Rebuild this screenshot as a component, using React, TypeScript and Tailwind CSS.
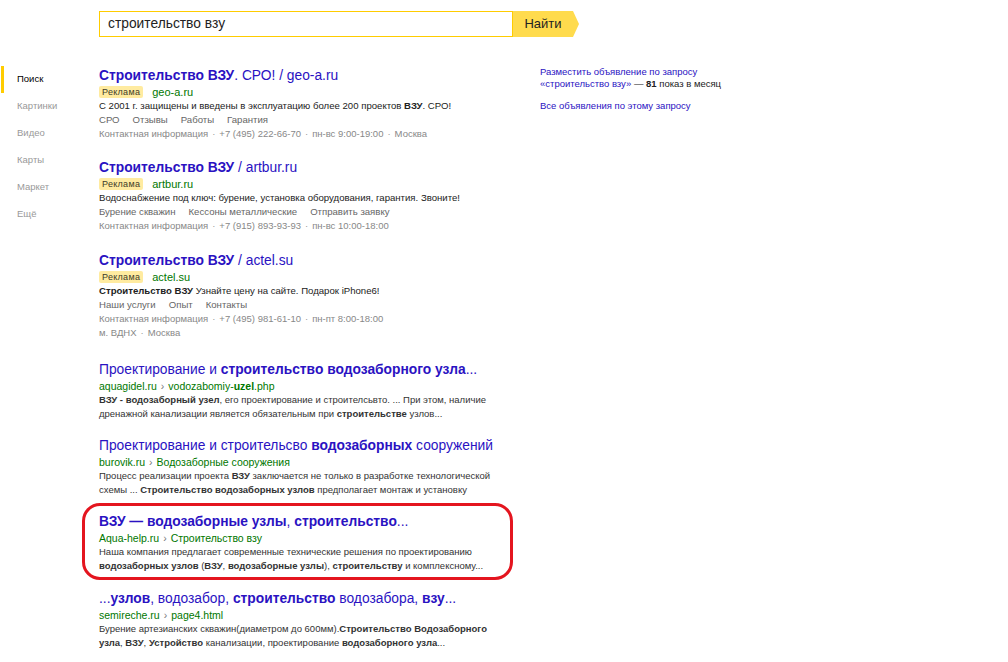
import React from "react";

const TITLE = "text-[#2a12c2]";

function Sep() {
  return <span className="mx-[4px] text-[#999]">·</span>;
}

function Ad({
  title,
  domain,
  snippet,
  links,
  contacts,
  extra,
}: {
  title: React.ReactNode;
  domain: string;
  snippet: React.ReactNode;
  links: string[];
  contacts: string[];
  extra?: string[];
}) {
  return (
    <div>
      <div className={`h-[18px] leading-[18px] text-[13.8px] ${TITLE} whitespace-nowrap`}>{title}</div>
      <div className="h-[14px] flex items-center">
        <span className="h-[12px] leading-[12px] px-[3px] rounded-[2px] bg-[#ffeba0] text-[9px] text-[#3d3b28] tracking-[0.3px]">
          Реклама
        </span>
        <span className="ml-[9px] text-[11px] text-[#070] leading-[14px]">{domain}</span>
      </div>
      <div className="h-[14px] leading-[14px] text-[9.6px] text-[#222] whitespace-nowrap">{snippet}</div>
      <div className="h-[14px] leading-[14px] text-[9.6px] text-[#666] flex gap-[13px] whitespace-nowrap">
        {links.map((l) => (
          <span key={l}>{l}</span>
        ))}
      </div>
      <div className="h-[14px] leading-[14px] text-[9.5px] text-[#888] whitespace-nowrap">
        {contacts.map((c, i) => (
          <React.Fragment key={c}>
            {i > 0 && <Sep />}
            <span>{c}</span>
          </React.Fragment>
        ))}
      </div>
      {extra && (
        <div className="h-[14px] leading-[14px] text-[9.5px] text-[#888] whitespace-nowrap">
          {extra.map((c, i) => (
            <React.Fragment key={c}>
              {i > 0 && <Sep />}
              <span>{c}</span>
            </React.Fragment>
          ))}
        </div>
      )}
    </div>
  );
}

function Organic({
  title,
  url,
  lines,
}: {
  title: React.ReactNode;
  url: React.ReactNode;
  lines: React.ReactNode[];
}) {
  return (
    <div>
      <div className={`h-[18px] leading-[18px] text-[13.8px] ${TITLE} whitespace-nowrap`}>{title}</div>
      <div className="h-[14px] leading-[14px] text-[10.5px] text-[#070] whitespace-nowrap">{url}</div>
      {lines.map((l, i) => (
        <div key={i} className="h-[14px] leading-[14px] text-[9.5px] text-[#333] whitespace-nowrap">
          {l}
        </div>
      ))}
    </div>
  );
}

const Arrow = () => <span className="mx-[4px] text-[#777]">›</span>;

export default function App() {
  return (
    <div
      className="w-[1008px] h-[662px] bg-white overflow-hidden text-black"
      style={{ fontFamily: '"Liberation Sans", Arial, sans-serif' }}
    >
      {/* header */}
      <div className="pt-[11px] pl-[99px] flex">
        <div className="w-[414px] h-[26px] border border-[#ffcc00] flex items-center pl-[8px] text-[13.8px] text-[#222]">
          строительство взу
        </div>
        <div className="flex">
          <div className="w-[60px] h-[26px] bg-[#ffdb4d] flex items-center justify-center text-[13px] text-[#222]">
            Найти
          </div>
          <div className="w-0 h-0 border-y-[13px] border-y-transparent border-l-[6px] border-l-[#ffdb4d]" />
        </div>
      </div>

      <div className="flex">
        {/* left nav */}
        <div className="w-[99px] pt-[29px] text-[9.5px]">
          {["Поиск", "Картинки", "Видео", "Карты", "Маркет", "Ещё"].map((n, i) => (
            <div key={n} className="h-[27px] flex items-center">
              <div className={`w-[3px] h-[27px] ml-[1px] ${i === 0 ? "bg-[#ffcc00]" : ""}`} />
              <span className={`ml-[13px] ${i === 0 ? "text-black" : "text-[#999]"}`}>{n}</span>
            </div>
          ))}
        </div>

        {/* main */}
        <div className="w-[441px] pt-[30px] flex flex-col">
          <Ad
            title={
              <>
                <b>Строительство ВЗУ</b>. СРО! / geo-a.ru
              </>
            }
            domain="geo-a.ru"
            snippet={
              <>
                С 2001 г. защищены и введены в эксплуатацию более 200 проектов <b>ВЗУ</b>. СРО!
              </>
            }
            links={["СРО", "Отзывы", "Работы", "Гарантия"]}
            contacts={["Контактная информация", "+7 (495) 222-66-70", "пн-вс 9:00-19:00", "Москва"]}
          />
          <div className="h-[18px]" />
          <Ad
            title={
              <>
                <b>Строительство ВЗУ</b> / artbur.ru
              </>
            }
            domain="artbur.ru"
            snippet="Водоснабжение под ключ: бурение, установка оборудования, гарантия. Звоните!"
            links={["Бурение скважин", "Кессоны металлические", "Отправить заявку"]}
            contacts={["Контактная информация", "+7 (915) 893-93-93", "пн-вс 10:00-18:00"]}
          />
          <div className="h-[19px]" />
          <Ad
            title={
              <>
                <b>Строительство ВЗУ</b> / actel.su
              </>
            }
            domain="actel.su"
            snippet={
              <>
                <b>Строительство ВЗУ</b> Узнайте цену на сайте. Подарок iPhone6!
              </>
            }
            links={["Наши услуги", "Опыт", "Контакты"]}
            contacts={["Контактная информация", "+7 (495) 981-61-10", "пн-пт 8:00-18:00"]}
            extra={["м. ВДНХ", "Москва"]}
          />
          <div className="h-[21px]" />
          <Organic
            title={
              <>
                Проектирование и <b>строительство водозаборного узла</b>...
              </>
            }
            url={
              <>
                aquagidel.ru
                <Arrow />
                vodozabomiy-<b>uzel</b>.php
              </>
            }
            lines={[
              <>
                <b>ВЗУ - водозаборный узел</b>, его проектирование и строителсьвто. ... При этом, наличие
              </>,
              <>
                дренажной канализации является обязательным при <b>строительстве</b> узлов...
              </>,
            ]}
          />
          <div className="h-[16px]" />
          <Organic
            title={
              <>
                Проектирование и строительсво <b>водозаборных</b> сооружений
              </>
            }
            url={
              <>
                burovik.ru
                <Arrow />
                <b className="font-normal">Водозаборные</b> сооружения
              </>
            }
            lines={[
              <>
                Процесс реализации проекта <b>ВЗУ</b> заключается не только в разработке технологической
              </>,
              <>
                схемы ... <b>Строительство водозаборных узлов</b> предполагает монтаж и установку
              </>,
            ]}
          />
          <div className="h-[16px]" />
          <div className="ml-[-17px] w-[431px] -mt-[10px] -mb-[7px] border-[3px] border-[#e4151f] rounded-[18px] pl-[14px] pt-[7px] pb-[4px]">
            <Organic
              title={
                <>
                  <b>ВЗУ — водозаборные узлы</b>, <b>строительство</b>...
                </>
              }
              url={
                <>
                  Aqua-help.ru
                  <Arrow />
                  Строительство взу
                </>
              }
              lines={[
                <>Наша компания предлагает современные технические решения по проектированию</>,
                <>
                  <b>водозаборных узлов</b> (<b>ВЗУ</b>, <b>водозаборные узлы</b>), <b>строительству</b> и комплексному...
                </>,
              ]}
            />
          </div>
          <div className="h-[17px]" />
          <Organic
            title={
              <>
                ...<b>узлов</b>, водозабор, <b>строительство</b> водозабора, <b>взу</b>...
              </>
            }
            url={
              <>
                semireche.ru
                <Arrow />
                page4.html
              </>
            }
            lines={[
              <>
                Бурение артезианских скважин(диаметром до 600мм).<b>Строительство Водозаборного</b>
              </>,
              <>
                <b>узла</b>, <b>ВЗУ</b>, <b>Устройство</b> канализации, проектирование <b>водозаборного узла</b>...
              </>,
            ]}
          />
        </div>

        {/* right column */}
        <div className="pt-[29px] text-[9.5px]">
          <div className="leading-[12px] text-[#2a12c2]">Разместить объявление по запросу</div>
          <div className="leading-[12px]">
            <span className="text-[#2a12c2]">«строительство взу»</span>
            <span className="text-[#222]">
              {" "}
              — <b>81</b> показ в месяц
            </span>
          </div>
          <div className="mt-[10px] leading-[12px] text-[#2a12c2]">Все объявления по этому запросу</div>
        </div>
      </div>
    </div>
  );
}
